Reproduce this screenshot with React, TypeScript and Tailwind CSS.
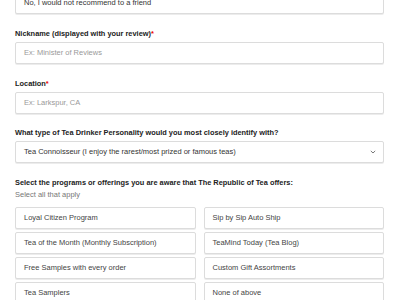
import React from 'react';

const offerings = [
  'Loyal Citizen Program',
  'Sip by Sip Auto Ship',
  'Tea of the Month (Monthly Subscription)',
  'TeaMind Today (Tea Blog)',
  'Free Samples with every order',
  'Custom Gift Assortments',
  'Tea Samplers',
  'None of above',
];

const Label: React.FC<{ text: string; required?: boolean }> = ({ text, required }) => (
  <div className="text-[7.4px] font-bold text-[#222] leading-[10px]">
    {text}
    {required && <span className="text-[#e00]">*</span>}
  </div>
);

const Box: React.FC<{ children: React.ReactNode; className?: string }> = ({ children, className }) => (
  <div
    className={
      'h-[22px] flex items-center px-[8px] border border-[#dcdcdc] rounded-[2px] bg-white shadow-[0_1px_0_#ececec] text-[7.5px] ' +
      (className ?? '')
    }
  >
    {children}
  </div>
);

export default function App() {
  return (
    <div className="w-[400px] h-[300px] overflow-hidden bg-white font-['Liberation_Sans',Arial,sans-serif]">
      <div className="pl-[15px] pr-[16px] mt-[-8px]">
        <Box className="text-[#333]">No, I would not recommend to a friend</Box>

        <div className="mt-[15px]">
          <Label text="Nickname (displayed with your review)" required />
          <Box className="mt-[3px] text-[#999]">Ex: Minister of Reviews</Box>
        </div>

        <div className="mt-[15px]">
          <Label text="Location" required />
          <Box className="mt-[3px] text-[#999]">Ex: Larkspur, CA</Box>
        </div>

        <div className="mt-[14px]">
          <Label text="What type of Tea Drinker Personality would you most closely identify with?" />
          <Box className="mt-[3px] text-[#333] justify-between">
            <span>Tea Connoisseur (I enjoy the rarest/most prized or famous teas)</span>
            <svg width="6" height="4" viewBox="0 0 6 4" className="mr-[-1px]">
              <path d="M0.8 0.9 L3 3 L5.2 0.9" fill="none" stroke="#555" strokeWidth="0.8" />
            </svg>
          </Box>
        </div>

        <div className="mt-[15px]">
          <Label text="Select the programs or offerings you are aware that The Republic of Tea offers:" />
          <div className="text-[7.5px] text-[#777] leading-[10px] mt-[2px]">Select all that apply</div>
          <div className="grid grid-cols-2 gap-x-[8px] gap-y-[3px] mt-[7px]">
            {offerings.map((o) => (
              <Box key={o} className="text-[#444]">
                {o}
              </Box>
            ))}
          </div>
        </div>
      </div>
    </div>
  );
}
